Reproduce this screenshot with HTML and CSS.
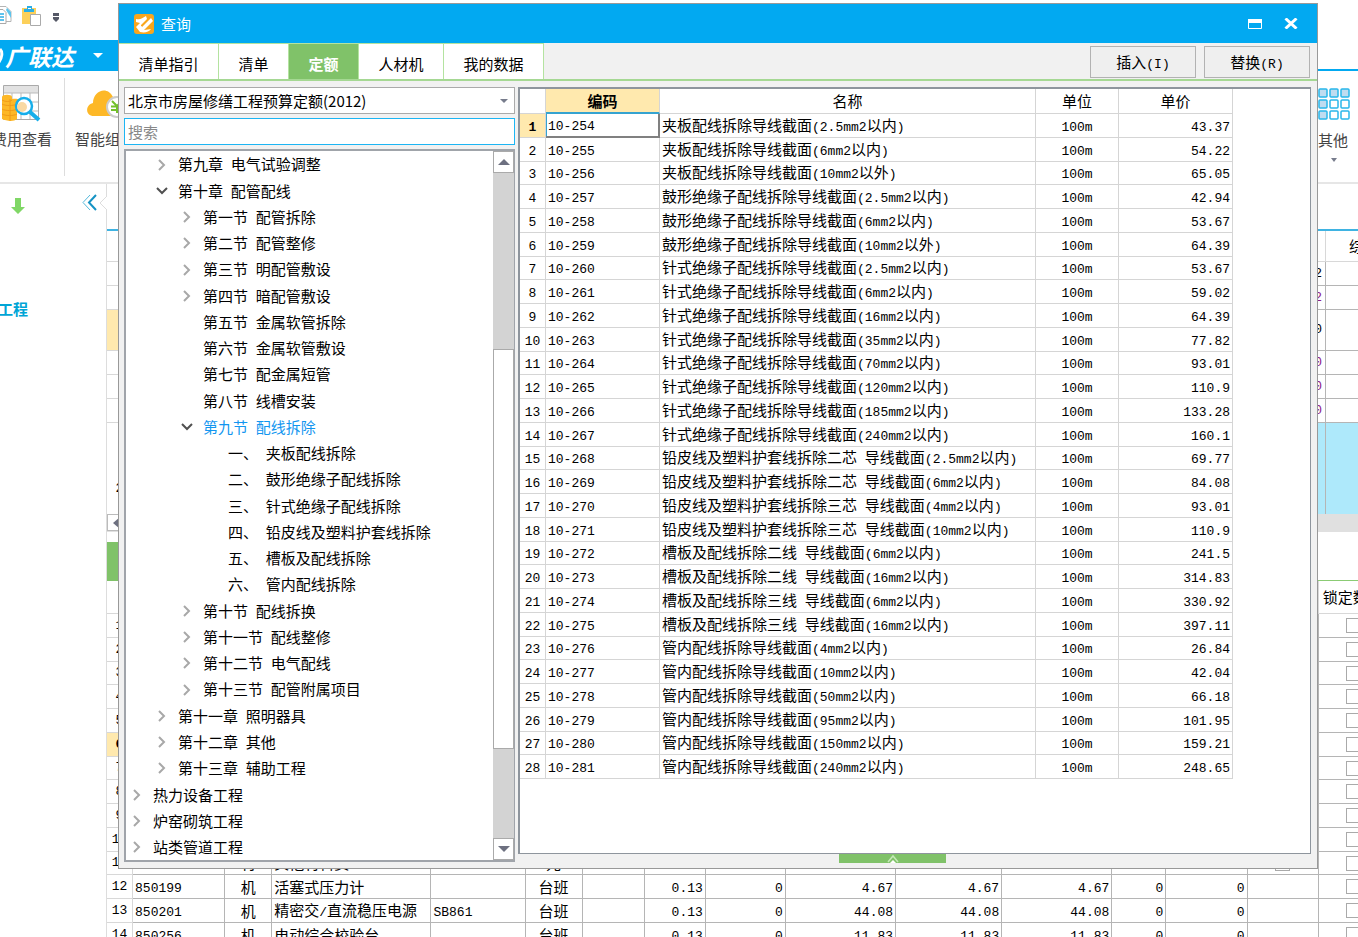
FILE: index.html
```html
<!DOCTYPE html>
<html lang="zh-CN">
<head>
<meta charset="utf-8">
<title>查询</title>
<link rel="stylesheet" href="styles.css">
</head>
<body>
<div class="app">
  <header class="quickbar">
    <svg class="quick-copy" width="12" height="20" viewBox="0 0 12 20"><path d="M-4 .500H6l5 5v10H6" fill="#fff" stroke="#b5b5b5"/><path d="M6 4l5 8V6L7 2z" fill="#5cc4ec"/><path d="M-3 3.500h6l3 3v11h-9" fill="#fff" stroke="#a9a9a9"/><path d="M-1 8h5M-1 11h5M-1 14h5" stroke="#2aaee6" stroke-width="1.500"/></svg>
    <svg width="20" height="21" viewBox="0 0 20 21"><path d="M0 2h14v16H0z" fill="#fcd05a"/><path d="M2 6V3h3V0h5v3h2v3z" fill="#2aaee6"/><path d="M6 2.500h3" stroke="#fff"/><path d="M8.500 8.500h10v11h-10z" fill="#fff" stroke="#aaa"/></svg>
    <svg class="quick-more" width="8" height="9" viewBox="0 0 8 9"><path d="M1 0h6v3H1z" fill="#555866"/><path d="M1 4h6v2L4 9 1 6z" fill="#555866"/></svg>
  </header>
  <div class="brandbar">
    <div class="brand"><svg width="5" height="18" viewBox="0 0 5 18"><path d="M0 2c3 3 2 9-1 13" fill="none" stroke="#fff" stroke-width="3"/></svg><strong>广联达</strong><svg width="10" height="5" viewBox="0 0 10 5"><path d="M0 0h10L5 5z" fill="#fff"/></svg></div>
    <div class="brand-line"></div>
  </div>
  <div class="ribbon">
    <button class="tool tool-cost">
      <svg width="42" height="40" viewBox="0 0 42 40"><path d="M3.500.500h35v34h-35z" fill="#fff" stroke="#aaa"/><path d="M4 1h34v7H4z" fill="#e2e2e2"/><path d="M4 8h34M4 17h34M4 26h34M12 8v26M21 8v26M30 8v26" stroke="#bbb"/><path d="M2 12c0-3 10-3 10 0v2c8-1 8 2 5 4v16c-3 3-11 2-15 0z" fill="#fdb827"/><path d="M2 15c3 2 8 2 10 0M2 19c3 2 12 2 15 0M2 24c3 2 12 2 15 0M2 29c3 2 12 2 15 0M10 14v22" fill="none" stroke="#f09a18"/><circle cx="24" cy="21" r="8" fill="#fff" stroke="#17aeea" stroke-width="2.500"/><circle cx="22" cy="22" r="5" fill="#f9d9a4"/><path d="M30 27l9 8" stroke="#17aeea" stroke-width="4"/></svg>
      <span>费用查看</span>
    </button>
    <button class="tool tool-smart">
      <svg width="43" height="40" viewBox="0 0 43 40"><path d="M7 31C-2 31-2 20 6 18 6 6 20 0 26 12c8-1 14 4 14 10 0 6-3 9-8 9z" fill="#fdb827"/><circle cx="30" cy="22" r="10" fill="#fff" stroke="#ccc" stroke-width="2"/><path d="M25 16l5 5 5-5M24 21.500h12M24 25h12M30 21v7" fill="none" stroke="#72c02c" stroke-width="2"/></svg>
      <span>智能组价</span>
    </button>
    <div class="ribbon-space"></div>
    <button class="tool tool-other">
      <svg width="34" height="34" viewBox="0 0 34 34" stroke="#29b6ea" stroke-width="1.500"><g fill="#bfdcf0"><rect x="1" y="1" width="8" height="8" rx="1"/><rect x="12" y="1" width="8" height="8" rx="1"/><rect x="23" y="1" width="8" height="8" rx="1"/><rect x="1" y="12" width="8" height="8" rx="1"/><rect x="1" y="23" width="8" height="8" rx="1"/></g><g fill="#fff"><rect x="12" y="12" width="8" height="8" rx="1"/><rect x="23" y="12" width="8" height="8" rx="1"/><rect x="12" y="23" width="8" height="8" rx="1"/><rect x="23" y="23" width="8" height="8" rx="1"/></g></svg>
      <span>其他</span>
      <svg width="6" height="4" viewBox="0 0 6 4"><path d="M0 0h6L3 4z" fill="#777c8c"/></svg>
    </button>
  </div>
  <div class="workspace">
    <aside class="side">
      <div class="side-tools">
        <svg class="down" width="14" height="16" viewBox="0 0 14 16"><path d="M4 0h6v9h4l-7 7-7-7h4z" fill="#80d766"/></svg>
        <svg width="15" height="17" viewBox="0 0 15 17" fill="none"><path d="M8 1L1 8.500 8 16" stroke="#55b9dc"/><path d="M14 1L7 8.500 14 16" stroke="#1593c4" stroke-width="2"/></svg>
      </div>
      <a class="project" href="#">工程</a>
      <svg class="notch" width="8" height="18" viewBox="0 0 8 18"><path d="M8 0v2L1 9l7 7v2" fill="#fff" stroke="#ddd"/></svg>
    </aside>
    <main class="main">
      <div class="main-gap"></div>
      <table class="grid upper">
        <colgroup><col class="w26"><col><col class="w100"><col class="w70"></colgroup>
        <thead><tr><th></th><th></th><th></th><th>综合</th></tr></thead>
        <tbody>
          <tr><td></td><td></td><td class="r">2</td><td></td></tr>
          <tr><td></td><td></td><td class="r purple">2</td><td></td></tr>
          <tr class="tall"><td class="mark"></td><td></td><td class="r">0</td><td></td></tr>
          <tr><td></td><td></td><td class="r purple">0</td><td></td></tr>
          <tr><td></td><td></td><td class="r purple">0</td><td></td></tr>
          <tr><td></td><td></td><td class="r purple">0</td><td></td></tr>
          <tr class="selected"><td class="low">2</td><td></td><td></td><td></td></tr>
        </tbody>
      </table>
      <div class="hscroll"><button aria-label="向左滚动"><svg width="8" height="12" viewBox="0 0 8 12"><path d="M7 0v12L0 6z" fill="#6d7080"/></svg></button></div>
      <div class="lower-tabs"><div></div></div>
      <table class="grid lower">
        <colgroup><col class="w26"><col class="w92"><col class="w47"><col class="w159"><col class="w94"><col class="w57"><col class="w62"><col class="w61"><col class="w80"><col class="w110"><col class="w106"><col class="w110"><col class="w54"><col class="w81"><col class="w71"><col class="w70"></colgroup>
        <thead><tr><th colspan="15"></th><th>锁定数量</th></tr></thead>
        <tbody id="resources"></tbody>
      </table>
    </main>
  </div>
</div>

<section class="dialog" role="dialog" aria-labelledby="dialog-title">
  <header class="titlebar">
    <svg width="20" height="20" viewBox="0 0 20 20"><rect width="20" height="20" rx="3" fill="#f9a61c"/><path d="M2 5c5 1 6-1 10-3l1 3-6 6 1 2 9-9 2 3-9 9c3 0 5-1 7-1-2 3-6 4-11 3L2 13l4-4-4-1z" fill="#fff"/><path d="M7 12l7-7" stroke="#f9a61c"/></svg>
    <h1 id="dialog-title">查询</h1>
    <button aria-label="最大化"><svg width="14" height="10" viewBox="0 0 14 10"><path d="M.500.500h13v9H.500z" fill="none" stroke="#fff"/><path d="M0 0h14v4H0z" fill="#fff"/></svg></button>
    <button aria-label="关闭"><svg width="14" height="11" viewBox="0 0 14 11"><path d="M1.500.500l11 10M12.500.500l-11 10" stroke="#fff" stroke-width="3"/></svg></button>
  </header>
  <nav class="toolbar">
    <button class="tab t-guide">清单指引</button><button class="tab t-list">清单</button><button class="tab t-quota active">定额</button><button class="tab t-labor">人材机</button><button class="tab t-mine">我的数据</button>
    <span class="toolbar-space"></span>
    <button class="action">插入<span class="m">(I)</span></button>
    <button class="action">替换<span class="m">(R)</span></button>
  </nav>
  <div class="content">
    <div class="browser">
      <div class="combo">
        <select aria-label="定额库"><option>北京市房屋修缮工程预算定额(2012)</option></select>
        <svg width="8" height="4" viewBox="0 0 8 4"><path d="M0 0h8L4 4z" fill="#777c8c"/></svg>
      </div>
      <input class="search" type="text" placeholder="搜索" aria-label="搜索">
      <div class="tree-box">
        <ul class="tree" id="tree"></ul>
        <div class="vscroll">
          <button aria-label="向上滚动"><svg width="12" height="6" viewBox="0 0 12 6"><path d="M0 6h12L6 0z" fill="#6d7080"/></svg></button>
          <div class="track-top"></div><div class="thumb"></div><div class="track-bottom"></div>
          <button aria-label="向下滚动"><svg width="12" height="6" viewBox="0 0 12 6"><path d="M0 0h12L6 6z" fill="#6d7080"/></svg></button>
        </div>
      </div>
    </div>
    <div class="results">
      <div class="table-box">
        <table class="quota">
          <colgroup><col class="w26"><col class="w114"><col class="w376"><col class="w83"><col class="w114"></colgroup>
          <thead><tr><th></th><th class="sorted">编码</th><th>名称</th><th>单位</th><th>单价</th></tr></thead>
          <tbody id="quota"></tbody>
        </table>
      </div>
      <button class="expander" aria-label="展开"><svg width="12" height="9" viewBox="0 0 12 9"><path d="M1 8l5-6 5 6" fill="none" stroke="#c5e8b8" stroke-width="1.500"/><path d="M3 9l3-3 3 3z" fill="#fff"/></svg></button>
    </div>
  </div>
</section>
<script src="app.js"></script>
</body>
</html>
```

FILE: styles.css
```css
* { box-sizing: border-box; }
body {
  margin: 0;
  height: 100vh;
  overflow: hidden;
  position: relative;
  background: #fff;
  color: #000;
  font: 15px/20px "Noto Sans CJK SC", sans-serif;
}
button, input, select { font: inherit; color: inherit; margin: 0; padding: 0; border: 0; background: none; }
svg { display: block; flex: none; }
.m { font-family: "Liberation Mono", monospace; font-size: 13px; line-height: 16px; white-space: pre; }

/* main window */
.app { display: flex; flex-direction: column; }
.quickbar { display: flex; align-items: flex-start; gap: 10px; height: 40px; padding-top: 6px; }
.quick-more { margin-top: 7px; }
.brandbar { display: flex; align-items: flex-end; height: 31px; }
.brand { display: flex; align-items: center; width: 119px; height: 31px; background: #02a9f1; color: #fff; }
.brand strong { width: 88px; font-size: 23px; line-height: 30px; font-style: italic; }
.brand-line { flex: 1; height: 2px; background: #02a9f1; }
.ribbon { display: flex; height: 113px; border-bottom: 2px solid #e6e6e6; color: #444; }
.tool { display: flex; flex-direction: column; align-items: flex-start; white-space: nowrap; padding-top: 14px; gap: 4px; }
.tool-cost { width: 65px; height: 98px; margin-top: 7px; padding-top: 7px; border-right: 1px solid #ddd; }
.tool-cost span { width: 52px; display: flex; justify-content: flex-end; }
.tool-smart { width: 82px; padding-left: 10px; }
.tool-smart svg { margin-left: 12px; }
.ribbon-space { flex: 1; }
.tool-other { width: 40px; padding-top: 17px; gap: 8px; }
.tool-other svg:last-child { margin-left: 13px; }
.workspace { display: flex; }
.side { position: relative; width: 107px; border-right: 1px solid #ddd; }
.side-tools { display: flex; justify-content: space-between; align-items: flex-start; padding: 10px 9px 0 11px; }
.down { margin-top: 4px; }
.project { display: flex; justify-content: flex-end; width: 28px; margin-top: 85px; white-space: nowrap; font-weight: bold; color: #00a5d6; text-decoration: none; }
.notch { position: absolute; top: 10px; right: -1px; }
.main { flex: 1; min-width: 0; overflow: hidden; }
.main-gap { height: 47px; border-bottom: 2px solid #3fb3e2; }
table { table-layout: fixed; border-collapse: separate; border-spacing: 0; }
th { font-weight: normal; }
th, td { padding: 0 2px; white-space: nowrap; overflow: hidden; line-height: 18px; }
.grid { width: 1282px; }
.grid th, .grid td { border-right: 1px solid #b5b5b5; border-bottom: 1px solid #b5b5b5; }
.grid th, .grid td:first-child { border-color: #d8d8d8; }
.grid tr { height: 24px; }
.grid thead tr { height: 31px; }
.grid td:first-child, .c { text-align: center; }
.r { text-align: right; }
.upper { width: calc(100% + 38px); }
.upper td, .lower td:first-child { font-family: "Liberation Mono", monospace; font-size: 13px; }
.upper th { text-align: left; padding: 0 0 0 23px; }
.upper .r { padding-right: 3px; }
.upper .tall { height: 41px; }
.upper .purple { color: #8b1a8b; }
.mark { background: #ffe9ae; font-weight: bold; }
.upper .selected { height: 91px; }
.upper .selected td { background: #aee9fb; border-bottom: 0; }
.upper .selected td.low { background: #fff; padding-top: 40px; }
.hscroll { height: 18px; background: #e0e0e0; }
.hscroll button { display: flex; align-items: center; width: 22px; height: 17px; padding-left: 5px; background: #fff; border: 1px solid #bbb; }
.lower-tabs { height: 49px; padding-top: 10px; border-bottom: 1px solid #8bcb74; }
.lower-tabs div { width: 80px; height: 39px; background: #80c269; }
.lower thead tr { height: 33px; }
.lower thead th { padding-left: 4px; text-align: left; }
.lower tbody tr:nth-child(4n+3), .quota tbody tr:nth-child(4n+3) { height: 23px; }
.lower input { display: block; width: 15px; height: 15px; margin: 0 auto; appearance: none; border: 1px solid #aaa; background: #fff; }

/* query dialog */
.dialog {
  position: absolute;
  inset: 3px 40px 68px 118px;
  display: flex;
  flex-direction: column;
  border: 1px solid #999;
  background: #f1f1f1;
}
.titlebar { display: flex; align-items: center; height: 39px; padding: 0 19px 0 15px; background: #02a9f1; color: #fff; }
.titlebar h1 { flex: 1; margin: 0 0 0 7px; font-size: 15px; font-weight: normal; }
.titlebar button + button { margin-left: 22px; }
.toolbar { display: flex; height: 38px; border-bottom: 2px solid #a5d893; }
.tab { background: #fff; border-right: 1px solid #b4e3a0; border-top: 1px solid #b4e3a0; padding-top: 4px; }
.tab.active { background: #80c269; color: #fff; font-weight: bold; }
.t-guide { width: 100px; }
.t-list, .t-quota { width: 70px; }
.t-labor { width: 85px; }
.t-mine { width: 100px; }
.toolbar-space { flex: 1; }
.action { width: 106px; height: 32px; margin: 3px 7px 0 0; border: 1px solid #b2b2b2; background: #efefef; }
.action + .action { margin-left: 1px; }
.content { flex: 1; display: flex; gap: 3px; min-height: 0; padding: 6px 6px 6px 5px; }
.browser { display: flex; flex-direction: column; gap: 4px; width: 391px; }
.combo { display: flex; align-items: center; height: 27px; padding: 0 6px 0 3px; border: 1px solid #aaa; background: #fff; }
.combo select { flex: 1; appearance: none; outline: 0; }
.search { height: 27px; padding: 0 3px; border: 1px solid #1db5f3; background: #fff; outline: 0; }
.search::placeholder { color: #888; opacity: 1; }
.tree-box { flex: 1; display: flex; min-height: 0; border: 2px solid #a0a4aa; border-right-width: 1px; background: #fff; overflow: hidden; }
.tree { flex: 1; margin: 0; padding: 0; list-style: none; }
.tree li { display: flex; align-items: center; height: 26px; white-space: nowrap; }
.tree li:nth-child(4n+1) { height: 27px; }
.tree button { display: flex; justify-content: center; width: 22px; margin-right: 5px; }
.tree .leaf { padding-left: 27px; }
.tree .level1 { margin-left: 25px; }
.tree .level2 { margin-left: 50px; }
.tree .level3 { margin-left: 75px; }
.tree .current { color: #1296f0; }
.vscroll { display: flex; flex-direction: column; width: 21px; background: #d3d3d3; }
.vscroll button { display: flex; align-items: center; justify-content: center; height: 22px; background: #fff; border: 1px solid #aaa; }
.track-top { flex: 177; }
.thumb { flex: 401; background: #fff; border: 1px solid #aaa; }
.track-bottom { flex: 90; }
.results { flex: 1; display: flex; flex-direction: column; align-items: center; min-width: 0; }
.table-box { width: 100%; flex: 1; min-height: 0; overflow: hidden; border: 2px solid #8e959d; border-width: 2px 1px 1px 2px; background: #fff; }
.quota { width: 713px; }
.quota th, .quota td { border-right: 1px solid #d5d5d5; border-bottom: 1px solid #d5d5d5; }
.quota tr { height: 24px; }
.quota thead tr { height: 25px; }
.quota td:first-child { text-align: center; }
.quota .sorted { background: #ffe9ae; border-bottom: 2px solid #35a3d0; font-weight: bold; }
.quota tbody tr:first-child td:first-child { background: #ffe9ae; font-weight: bold; }
.quota tbody tr:first-child td:nth-child(2) { border-right: 2px solid #808080; border-bottom: 2px solid #808080; box-shadow: inset 1px 0 #35a3d0; }
.expander { display: flex; justify-content: center; width: 107px; height: 9px; margin-bottom: -1px; margin-right: 44px; background: #80c269; }
.w26 { width: 26px; }
.w47 { width: 47px; }
.w54 { width: 54px; }
.w57 { width: 57px; }
.w61 { width: 61px; }
.w62 { width: 62px; }
.w70 { width: 70px; }
.w71 { width: 71px; }
.w80 { width: 80px; }
.w81 { width: 81px; }
.w83 { width: 83px; }
.w92 { width: 92px; }
.w94 { width: 94px; }
.w100 { width: 100px; }
.w106 { width: 106px; }
.w110 { width: 110px; }
.w114 { width: 114px; }
.w159 { width: 159px; }
.w376 { width: 376px; }
```

FILE: app.js
```js
// Latin runs and spaces use the half-width monospace face.
const mono = (s) => s.replace(/[\x20-\x7e]+/g, (run) => `<span class="m">${run}</span>`);

const J = '夹板配线拆除导线截面', G = '鼓形绝缘子配线拆除导线截面', Z = '针式绝缘子配线拆除导线截面';
const Q2 = '铅皮线及塑料护套线拆除二芯 导线截面', Q3 = '铅皮线及塑料护套线拆除三芯 导线截面';
const C2 = '槽板及配线拆除二线 导线截面', C3 = '槽板及配线拆除三线 导线截面', N = '管内配线拆除导线截面';
const quota = [
  [J, '2.5mm2以内', '43.37'], [J, '6mm2以内', '54.22'], [J, '10mm2以外', '65.05'],
  [G, '2.5mm2以内', '42.94'], [G, '6mm2以内', '53.67'], [G, '10mm2以外', '64.39'],
  [Z, '2.5mm2以内', '53.67'], [Z, '6mm2以内', '59.02'], [Z, '16mm2以内', '64.39'],
  [Z, '35mm2以内', '77.82'], [Z, '70mm2以内', '93.01'], [Z, '120mm2以内', '110.9'],
  [Z, '185mm2以内', '133.28'], [Z, '240mm2以内', '160.1'],
  [Q2, '2.5mm2以内', '69.77'], [Q2, '6mm2以内', '84.08'],
  [Q3, '4mm2以内', '93.01'], [Q3, '10mm2以内', '110.9'],
  [C2, '6mm2以内', '241.5'], [C2, '16mm2以内', '314.83'],
  [C3, '6mm2以内', '330.92'], [C3, '16mm2以内', '397.11'],
  [N, '4mm2以内', '26.84'], [N, '10mm2以内', '42.04'], [N, '50mm2以内', '66.18'],
  [N, '95mm2以内', '101.95'], [N, '150mm2以内', '159.21'], [N, '240mm2以内', '248.65'],
];
document.getElementById('quota').innerHTML = quota.map(([name, size, price], i) =>
  `<tr><td>${mono(String(i + 1))}</td><td>${mono('10-' + (254 + i))}</td><td>${mono(`${name}(${size})`)}</td><td class="c">${mono('100m')}</td><td class="r">${mono(price)}</td></tr>`
).join('');

// [level, state, label]: state is '>' closed, 'v' open, '' leaf
const tree = [
  [1, '>', '第九章 电气试验调整'], [1, 'v', '第十章 配管配线'],
  [2, '>', '第一节 配管拆除'], [2, '>', '第二节 配管整修'], [2, '>', '第三节 明配管敷设'], [2, '>', '第四节 暗配管敷设'],
  [2, '', '第五节 金属软管拆除'], [2, '', '第六节 金属软管敷设'], [2, '', '第七节 配金属短管'], [2, '', '第八节 线槽安装'],
  [2, 'v', '第九节 配线拆除'],
  [3, '', '一、 夹板配线拆除'], [3, '', '二、 鼓形绝缘子配线拆除'], [3, '', '三、 针式绝缘子配线拆除'],
  [3, '', '四、 铅皮线及塑料护套线拆除'], [3, '', '五、 槽板及配线拆除'], [3, '', '六、 管内配线拆除'],
  [2, '>', '第十节 配线拆换'], [2, '>', '第十一节 配线整修'], [2, '>', '第十二节 电气配线'], [2, '>', '第十三节 配管附属项目'],
  [1, '>', '第十一章 照明器具'], [1, '>', '第十二章 其他'], [1, '>', '第十三章 辅助工程'],
  [0, '>', '热力设备工程'], [0, '>', '炉窑砌筑工程'], [0, '>', '站类管道工程'],
];
const closed = '<svg width="8" height="12" viewBox="0 0 8 12"><path d="M1 1l5 5-5 5" fill="none" stroke="#a8a8a8" stroke-width="2"/></svg>';
const open = '<svg width="12" height="8" viewBox="0 0 12 8"><path d="M1 1l5 5 5-5" fill="none" stroke="#505050" stroke-width="2"/></svg>';
document.getElementById('tree').innerHTML = tree.map(([level, state, label]) => {
  const toggle = state ? `<button aria-label="${state === 'v' ? '折叠' : '展开'} ${label}">${state === 'v' ? open : closed}</button>` : '';
  const current = label === '第九节 配线拆除' ? ' current' : '';
  return `<li class="level${level}${state ? '' : ' leaf'}${current}">${toggle}<span>${mono(label)}</span></li>`;
}).join('');

const box = '<input type="checkbox" aria-label="锁定数量">';
const details = {
  11: ['', '材', '其他材料费', '', '元', '', '', '', '', '', '', '', ''],
  12: ['850199', '机', '活塞式压力计', '', '台班', '', '0.13', '0', '4.67', '4.67', '4.67', '0', '0'],
  13: ['850201', '机', '精密交/直流稳压电源', 'SB861', '台班', '', '0.13', '0', '44.08', '44.08', '44.08', '0', '0'],
  14: ['850256', '机', '电动综合校验台', '', '台班', '', '0.13', '0', '11.83', '11.83', '11.83', '0', '0'],
};
const blank = Array(13).fill('');
let rows = '';
for (let n = 1; n <= 14; n++) {
  const cells = (details[n] || blank).map((text, i) =>
    `<td class="${i === 1 || i === 4 ? 'c' : i > 5 ? 'r' : ''}">${mono(text)}</td>`).join('');
  rows += `<tr><td class="${n === 6 ? 'mark' : ''}">${n}</td>${cells}<td>${n === 11 ? box : ''}</td><td>${box}</td></tr>`;
}
document.getElementById('resources').innerHTML = rows;
```
